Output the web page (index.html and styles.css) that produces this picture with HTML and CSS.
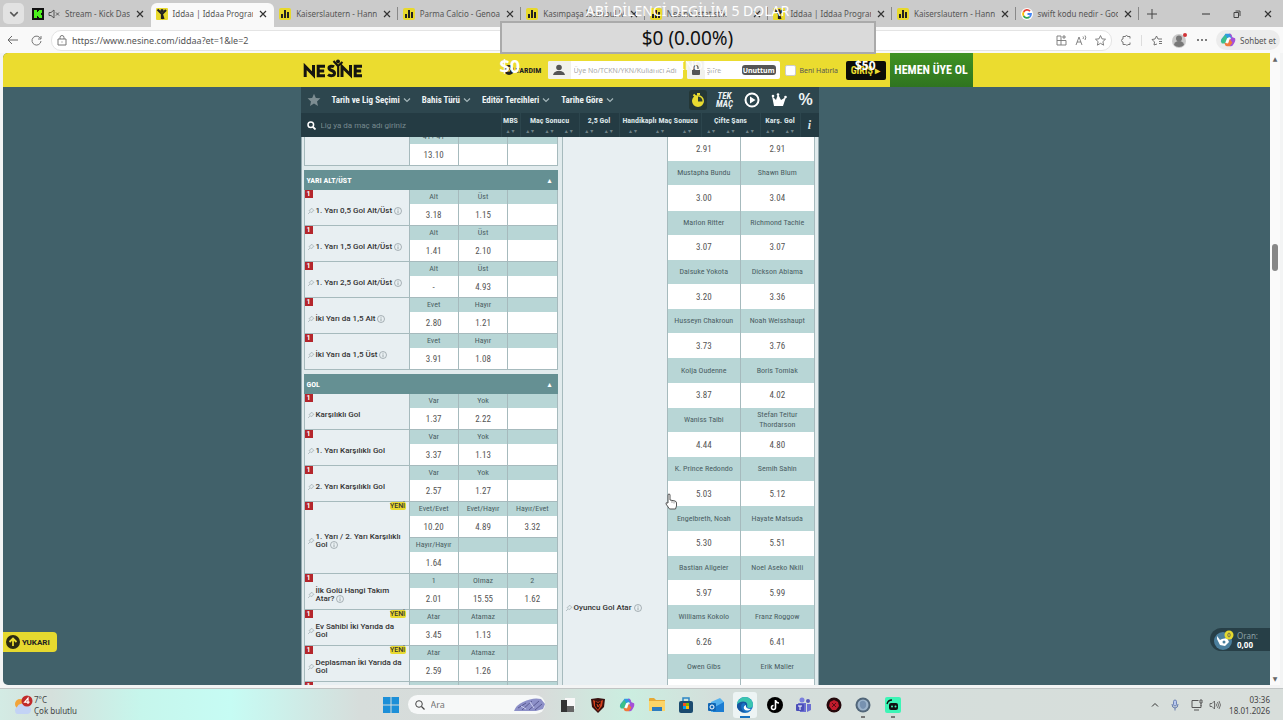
FILE: index.html
```html
<!DOCTYPE html>
<html lang="tr">
<head>
	<meta charset="UTF-8">
	<title>Iddaa | Iddaa Programı | Nesine</title>
	<link rel="stylesheet" href="styles.css">
</head>
<body>
	<svg class="defs" aria-hidden="true">
		<symbol id="close" viewBox="0 0 8 8"><path d="M1 1l6 6M7 1l-6 6" stroke="#333" stroke-width="1.2"/></symbol>
		<symbol id="stats" viewBox="0 0 12 12"><rect width="12" height="12" rx="2" fill="#e8d92c"/><path d="M2 6h2v4H2zM5 2h2v8H5zM8 4h2v6H8z" fill="#222"/></symbol>
		<symbol id="man" viewBox="0 0 12 12"><rect width="12" height="12" rx="1" fill="#e8d92c"/><circle cx="6" cy="2.6" r="1.600" fill="#222"/><path d="M1.500 1.500l4.500 4.500 4-4M6 5v6M5.500 5l2 6" stroke="#222" stroke-width="2.200" fill="none"/></symbol>
		<symbol id="down" viewBox="0 0 8 8"><path d="M1 2.500l3 3 3-3" fill="none" stroke="currentColor" stroke-width="1.200"/></symbol>
		<symbol id="star" viewBox="0 0 12 12"><path d="M6 .6l1.600 3.600 3.900.4-2.900 2.600.8 3.900L6 9.100l-3.400 2 .8-3.900L.5 4.600l3.900-.4z"/></symbol>
		<symbol id="pin" viewBox="0 0 8 8"><path d="M4.500 1l2.500 2.500-1.500.5-1 2-2.500-2.500 2-1zM3 5L1 7" fill="none" stroke="#aab6ba" stroke-width=".8"/></symbol>
		<symbol id="info" viewBox="0 0 8 8"><circle cx="4" cy="4" r="3.500" fill="none" stroke="#8b979b" stroke-width=".7"/><path d="M4 3.400v2.800M4 1.800v.9" stroke="#8b979b" stroke-width=".8"/></symbol>
		<symbol id="copilot" viewBox="0 0 18 18"><path d="M6 2h6l2 5-4-1-4 6-5-1c0-4 3-5 5-9z" fill="#2f9be0"/><path d="M2 8l4-5 2 4-2 6H3c-2 0-2-2-1-5z" fill="#3cc08a"/><path d="M10 2c3 0 3 1 4 4l3 1c1 3-1 5-2 7-1 2-2 2-4 2l-1-5 3-5z" fill="#a54fd8"/><path d="M5 12l4 1 2-5 3 4-3 4H8c-2 0-2-1-3-4z" fill="#f07a3c"/><path d="M8 7l3-1-2 6-3 0z" fill="#fff"/></symbol>
	</svg>

	<div class="tabbar">
		<button class="tab-menu" aria-label="Sekmeler"><svg width="10" height="10"><use href="#down"/></svg></button>
		<div class="tabs">
			<div class="tab">
				<svg width="12" height="12" viewBox="0 0 12 12"><rect width="12" height="12" fill="#111"/><path d="M2 2h3v2h1V3h1V2h3v3H9v2h1v3H7V9H6V8H5v2H2z" fill="#4cf01c"/></svg>
				<svg width="12" height="10" viewBox="0 0 12 10"><path d="M1 3.500h2l3-2.500v8L3 6.500H1zM8 3.500l3 3M11 3.500l-3 3" fill="none" stroke="#555"/></svg>
				<span>Stream - Kick Dashboard</span>
				<button class="tab-close" aria-label="Kapat"><svg width="8" height="8"><use href="#close"/></svg></button>
			</div>
			<div class="tab active">
				<svg width="12" height="12"><use href="#man"/></svg>
				<span>Iddaa | Iddaa Programı | Nesine</span>
				<button class="tab-close" aria-label="Kapat"><svg width="8" height="8"><use href="#close"/></svg></button>
			</div>
			<div class="tab line">
				<svg width="12" height="12"><use href="#stats"/></svg>
				<span>Kaiserslautern - Hannover</span>
				<button class="tab-close" aria-label="Kapat"><svg width="8" height="8"><use href="#close"/></svg></button>
			</div>
			<div class="tab line">
				<svg width="12" height="12"><use href="#stats"/></svg>
				<span>Parma Calcio - Genoa Genel</span>
				<button class="tab-close" aria-label="Kapat"><svg width="8" height="8"><use href="#close"/></svg></button>
			</div>
			<div class="tab line">
				<svg width="12" height="12"><use href="#stats"/></svg>
				<span>Kasımpaşa İstanbul Maçı</span>
				<button class="tab-close" aria-label="Kapat"><svg width="8" height="8"><use href="#close"/></svg></button>
			</div>
			<div class="tab line">
				<svg width="12" height="12"><use href="#stats"/></svg>
				<span>Nesine İstatistik</span>
				<button class="tab-close" aria-label="Kapat"><svg width="8" height="8"><use href="#close"/></svg></button>
			</div>
			<div class="tab line">
				<svg width="12" height="12"><use href="#man"/></svg>
				<span>Iddaa | Iddaa Programı | Nesine</span>
				<button class="tab-close" aria-label="Kapat"><svg width="8" height="8"><use href="#close"/></svg></button>
			</div>
			<div class="tab line">
				<svg width="12" height="12"><use href="#stats"/></svg>
				<span>Kaiserslautern - Hannover</span>
				<button class="tab-close" aria-label="Kapat"><svg width="8" height="8"><use href="#close"/></svg></button>
			</div>
			<div class="tab line">
				<svg width="12" height="12" viewBox="0 0 12 12"><circle cx="6" cy="6" r="6" fill="#fff"/><g fill="none" stroke-width="1.800"><path d="M9 3.200A4 4 0 0 0 2.600 4" stroke="#ea4335"/><path d="M2.600 4a4 4 0 0 0 0 4" stroke="#fbbc05"/><path d="M2.600 8A4 4 0 0 0 8.500 9" stroke="#34a853"/><path d="M8.500 9A4 4 0 0 0 10 6H6.500" stroke="#4285f4"/></g></svg>
				<span>swift kodu nedir - Google'da</span>
				<button class="tab-close" aria-label="Kapat"><svg width="8" height="8"><use href="#close"/></svg></button>
			</div>
		</div>
		<div class="window-controls">
			<button aria-label="Yeni sekme"><svg width="10" height="10" viewBox="0 0 10 10"><path d="M5 0v10M0 5h10" stroke="#444"/></svg></button>
			<span class="space"></span>
			<button aria-label="Küçült"><svg width="8" height="8" viewBox="0 0 8 8"><path d="M0 4h8" stroke="#333"/></svg></button>
			<button aria-label="Geri yükle"><svg width="8" height="8" viewBox="0 0 8 8"><path d="M1 2.500h4.500v5H1zM2.500 1h4.500v5" fill="none" stroke="#444"/></svg></button>
			<button aria-label="Pencereyi kapat"><svg width="8" height="8"><use href="#close"/></svg></button>
		</div>
	</div>

	<div class="toolbar">
		<button aria-label="Geri"><svg width="12" height="10" viewBox="0 0 12 10"><path d="M11 5H1M5 1L1 5l4 4" fill="none" stroke="#666"/></svg></button>
		<button aria-label="Yenile"><svg width="11" height="11" viewBox="0 0 11 11"><path d="M9.500 3.500A4.500 4.500 0 1 0 10 6M10 1v3H7" fill="none" stroke="#777"/></svg></button>
		<div class="address">
			<svg width="10" height="11" viewBox="0 0 10 11"><path d="M1 4h8v6H1zM3 4V2.500a2 2 0 0 1 4 0V4M5 6.500v1" fill="none" stroke="#777"/></svg>
			<input type="text" aria-label="Adres" value="https://www.nesine.com/iddaa?et=1&amp;le=2">
			<button aria-label="Uygulamalar"><svg width="11" height="11" viewBox="0 0 11 11"><path d="M1 1h4v9H1zM1 5.500h9M5 10h5V5.500M8 0v4M6 2h4" fill="none" stroke="#777" stroke-width=".9"/></svg></button>
			<button aria-label="Sesli oku"><svg width="12" height="11" viewBox="0 0 12 11"><path d="M1 10l3-8 3 8M2 7h4M8 1.500q1 1 0 2.500M10 .5q1.500 2 0 4.500" fill="none" stroke="#777" stroke-width=".9"/></svg></button>
			<button aria-label="Sık kullanılan ekle"><svg class="outline" width="11" height="11"><use href="#star"/></svg></button>
		</div>
		<div class="tools">
			<button aria-label="Uzantılar"><svg width="11" height="11" viewBox="0 0 11 11"><path d="M9 3.500V1.500H6.500a1 1 0 0 0-2 0H2v2.500a1.500 1.500 0 0 0 0 3V9.500h2.500a1.500 1.500 0 0 0 2.500 0H9V7.500" fill="none" stroke="#777"/></svg></button>
			<i class="bar"></i>
			<button aria-label="Sık kullanılanlar"><svg width="12" height="11" viewBox="0 0 12 11"><path d="M6 9L3 10l.5-3L1 4.500l3-.5 1.500-3L7 4h4M8 6.500h3M8 8.500h3" fill="none" stroke="#666" stroke-width=".9"/></svg></button>
			<button aria-label="Profil"><svg width="16" height="16" viewBox="0 0 16 16"><circle cx="7" cy="9" r="7" fill="#c9c9c9"/><circle cx="7" cy="6.500" r="3" fill="#777"/><path d="M2 13a5 4 0 0 1 10 0 7 7 0 0 1-10 0z" fill="#777"/><circle cx="13" cy="3" r="2" fill="#d13438"/></svg></button>
			<button aria-label="Ayarlar"><svg width="10" height="4" viewBox="0 0 10 4"><circle cx="1" cy="2" r="1" fill="#555"/><circle cx="5" cy="2" r="1" fill="#555"/><circle cx="9" cy="2" r="1" fill="#555"/></svg></button>
			<button class="chat"><svg width="16" height="16"><use href="#copilot"/></svg>Sohbet et</button>
		</div>
	</div>

	<div class="browser">
		<main class="page">
			<header class="site">
				<div class="site-inner">
					<a class="logo" href="#" aria-label="Nesine">
						<svg width="60" height="20" viewBox="0 0 60 20"><g fill="none" stroke="#151510" stroke-width="3"><path d="M2.200 18V7.500L10.500 16V6M22 7.200h-6.800v9.600H22M15.200 12h6M31 7.800c-1.500-1-5-1-5 1.200 0 3 5.500 2 5.500 5.200 0 3-4.500 3-6.500 1.400M39 18V7.500l8.500 8.500V6M59 7.200h-6.800v9.600H59M52.200 12h6"/><path d="M30.500 2l4.500 5L39.500 3M35.200 6v12" stroke-width="2.200"/></g><circle cx="35" cy="2.500" r="2" fill="#151510"/></svg>
					</a>
					<a class="help" href="#"><svg width="14" height="12" viewBox="0 0 14 12"><circle cx="7" cy="6" r="5" fill="#222"/><path d="M5 4.500q2-2 4 0Q9 6 7 6.500V8" fill="none" stroke="#ebdc2f"/></svg>YARDIM</a>
					<label class="field user">
						<i><svg width="12" height="12" viewBox="0 0 12 12"><circle cx="6" cy="3.500" r="2.800" fill="#555"/><path d="M0 11q.5-3 4-4h4q3.500 1 4 4z" fill="#555"/></svg></i>
						<input type="text" aria-label="Kullanıcı adı" placeholder="Üye No/TCKN/YKN/Kullanıcı Adı">
					</label>
					<div class="field pass">
						<i><svg width="8" height="10" viewBox="0 0 8 10"><rect y="4" width="8" height="6" rx="1" fill="#555"/><path d="M2 4V2.500a2 2 0 0 1 4 0V4" fill="none" stroke="#555" stroke-width="1.200"/></svg></i>
						<input type="password" aria-label="Şifre" placeholder="Şifre">
						<button>Unuttum</button>
					</div>
					<label class="remember"><input type="checkbox">Beni Hatırla</label>
					<button class="login">GİRİŞ ▸</button>
					<a class="join" href="#">HEMEN ÜYE OL</a>
				</div>
			</header>

			<div class="content">
				<section class="book">
					<nav class="menu">
						<svg class="fav" width="14" height="14"><use href="#star"/></svg>
						<button>Tarih ve Lig Seçimi <svg width="8" height="8"><use href="#down"/></svg></button>
						<button>Bahis Türü <svg width="8" height="8"><use href="#down"/></svg></button>
						<button>Editör Tercihleri <svg width="8" height="8"><use href="#down"/></svg></button>
						<button>Tarihe Göre <svg width="8" height="8"><use href="#down"/></svg></button>
						<div class="quick">
							<button class="on" aria-label="Canlı"><svg width="14" height="16" viewBox="0 0 14 16"><path d="M2.500 2.500l2 2M6 2h3" stroke="#e9dc30" stroke-width="2"/><circle cx="7" cy="9" r="5" fill="#e9dc30" stroke="#e9dc30" stroke-width="2"/><path d="M7 9.500V4.500a5 5 0 0 1 4.500 5z" fill="#2c3f33"/></svg></button>
							<button class="single">TEK<br>MAÇ</button>
							<button aria-label="Yayın"><svg width="16" height="16" viewBox="0 0 16 16"><circle cx="8" cy="8" r="6.500" fill="none" stroke="#fff" stroke-width="2"/><path d="M6 4.500l5.500 3.500L6 11.500z" fill="#fff"/></svg></button>
							<button aria-label="Kral"><svg width="16" height="16" viewBox="0 0 16 16"><path d="M3 14L1 4l4 4 2-6 3 6 5-3-3 9z" fill="#fff"/><circle cx="2" cy="4" r="1.300" fill="#fff"/><circle cx="7" cy="2.500" r="1.300" fill="#fff"/><circle cx="14.500" cy="5" r="1.300" fill="#fff"/></svg></button>
							<button class="percent">%</button>
						</div>
					</nav>
					<div class="filters">
						<label class="search">
							<svg width="9" height="9" viewBox="0 0 9 9"><circle cx="3.800" cy="3.800" r="2.800" fill="none" stroke="#fff" stroke-width="1.500"/><path d="M6 6l2.500 2.500" stroke="#fff" stroke-width="1.800"/></svg>
							<input type="text" aria-label="Ara" placeholder="Lig ya da maç adı giriniz">
						</label>
						<div class="col c1">MBS<small>▴ ▾</small></div>
						<div class="col c3">Maç Sonucu<small>▴ ▾<b></b>▴ ▾<b></b>▴ ▾</small></div>
						<div class="col c2">2,5 Gol<small>▴ ▾<b></b>▴ ▾</small></div>
						<div class="col c4">Handikaplı Maç Sonucu<small>▴ ▾<b></b>▴ ▾<b></b>▴ ▾</small></div>
						<div class="col c3">Çifte Şans<small>▴ ▾<b></b>▴ ▾<b></b>▴ ▾</small></div>
						<div class="col c2">Karş. Gol<small>▴ ▾<b></b>▴ ▾</small></div>
						<div class="col about">i</div>
					</div>

					<div class="odds">
						<div class="markets">
							<table>
								<tr class="labels"><th rowspan="2"></th><td>41+ 41</td><td></td><td></td></tr>
								<tr><td><button>13.10</button></td><td></td><td></td></tr>
							</table>

							<h2>YARI ALT/ÜST <span>▴</span></h2>
							<table>
								<tr class="labels"><th rowspan="2"><b class="mbs">1</b><div><svg><use href="#pin"/></svg><p>1. Yarı 0,5 Gol Alt/Üst <svg><use href="#info"/></svg></p></div></th><td>Alt</td><td>Üst</td><td></td></tr>
								<tr><td><button>3.18</button></td><td><button>1.15</button></td><td></td></tr>
								<tr class="labels"><th rowspan="2"><b class="mbs">1</b><div><svg><use href="#pin"/></svg><p>1. Yarı 1,5 Gol Alt/Üst <svg><use href="#info"/></svg></p></div></th><td>Alt</td><td>Üst</td><td></td></tr>
								<tr><td><button>1.41</button></td><td><button>2.10</button></td><td></td></tr>
								<tr class="labels"><th rowspan="2"><b class="mbs">1</b><div><svg><use href="#pin"/></svg><p>1. Yarı 2,5 Gol Alt/Üst <svg><use href="#info"/></svg></p></div></th><td>Alt</td><td>Üst</td><td></td></tr>
								<tr><td>-</td><td><button>4.93</button></td><td></td></tr>
								<tr class="labels"><th rowspan="2"><b class="mbs">1</b><div><svg><use href="#pin"/></svg><p>İki Yarı da 1,5 Alt <svg><use href="#info"/></svg></p></div></th><td>Evet</td><td>Hayır</td><td></td></tr>
								<tr><td><button>2.80</button></td><td><button>1.21</button></td><td></td></tr>
								<tr class="labels"><th rowspan="2"><b class="mbs">1</b><div><svg><use href="#pin"/></svg><p>İki Yarı da 1,5 Üst <svg><use href="#info"/></svg></p></div></th><td>Evet</td><td>Hayır</td><td></td></tr>
								<tr><td><button>3.91</button></td><td><button>1.08</button></td><td></td></tr>
							</table>

							<h2>GOL <span>▴</span></h2>
							<table>
								<tr class="labels"><th rowspan="2"><b class="mbs">1</b><div><svg><use href="#pin"/></svg><p>Karşılıklı Gol</p></div></th><td>Var</td><td>Yok</td><td></td></tr>
								<tr><td><button>1.37</button></td><td><button>2.22</button></td><td></td></tr>
								<tr class="labels"><th rowspan="2"><b class="mbs">1</b><div><svg><use href="#pin"/></svg><p>1. Yarı Karşılıklı Gol</p></div></th><td>Var</td><td>Yok</td><td></td></tr>
								<tr><td><button>3.37</button></td><td><button>1.13</button></td><td></td></tr>
								<tr class="labels"><th rowspan="2"><b class="mbs">1</b><div><svg><use href="#pin"/></svg><p>2. Yarı Karşılıklı Gol</p></div></th><td>Var</td><td>Yok</td><td></td></tr>
								<tr><td><button>2.57</button></td><td><button>1.27</button></td><td></td></tr>
								<tr class="labels"><th rowspan="4"><b class="mbs">1</b><b class="new">YENİ</b><div><svg><use href="#pin"/></svg><p>1. Yarı / 2. Yarı Karşılıklı Gol <svg><use href="#info"/></svg></p></div></th><td>Evet/Evet</td><td>Evet/Hayır</td><td>Hayır/Evet</td></tr>
								<tr><td><button>10.20</button></td><td><button>4.89</button></td><td><button>3.32</button></td></tr>
								<tr class="labels"><td>Hayır/Hayır</td><td></td><td></td></tr>
								<tr><td><button>1.64</button></td><td></td><td></td></tr>
								<tr class="labels"><th rowspan="2"><b class="mbs">1</b><div><svg><use href="#pin"/></svg><p>İlk Golü Hangi Takım Atar? <svg><use href="#info"/></svg></p></div></th><td>1</td><td>Olmaz</td><td>2</td></tr>
								<tr><td><button>2.01</button></td><td><button>15.55</button></td><td><button>1.62</button></td></tr>
								<tr class="labels"><th rowspan="2"><b class="mbs">1</b><b class="new">YENİ</b><div><svg><use href="#pin"/></svg><p>Ev Sahibi İki Yarıda da Gol</p></div></th><td>Atar</td><td>Atamaz</td><td></td></tr>
								<tr><td><button>3.45</button></td><td><button>1.13</button></td><td></td></tr>
								<tr class="labels"><th rowspan="2"><b class="mbs">1</b><b class="new">YENİ</b><div><svg><use href="#pin"/></svg><p>Deplasman İki Yarıda da Gol</p></div></th><td>Atar</td><td>Atamaz</td><td></td></tr>
								<tr><td><button>2.59</button></td><td><button>1.26</button></td><td></td></tr>
								<tr class="labels"><th rowspan="2"><b class="mbs">1</b></th><td></td><td></td><td></td></tr>
								<tr><td></td><td></td><td></td></tr>
							</table>
						</div>

						<div class="scorers">
							<table>
								<tr><th rowspan="23"><div><svg><use href="#pin"/></svg><p>Oyuncu Gol Atar <svg><use href="#info"/></svg></p></div></th><td><button>2.91</button></td><td><button>2.91</button></td></tr>
								<tr class="labels"><td>Mustapha Bundu</td><td>Shawn Blum</td></tr>
								<tr><td><button>3.00</button></td><td><button>3.04</button></td></tr>
								<tr class="labels"><td>Marlon Ritter</td><td>Richmond Tachie</td></tr>
								<tr><td><button>3.07</button></td><td><button>3.07</button></td></tr>
								<tr class="labels"><td>Daisuke Yokota</td><td>Dickson Abiama</td></tr>
								<tr><td><button>3.20</button></td><td><button>3.36</button></td></tr>
								<tr class="labels"><td>Husseyn Chakroun</td><td>Noah Weisshaupt</td></tr>
								<tr><td><button>3.73</button></td><td><button>3.76</button></td></tr>
								<tr class="labels"><td>Kolja Oudenne</td><td>Boris Tomiak</td></tr>
								<tr><td><button>3.87</button></td><td><button>4.02</button></td></tr>
								<tr class="labels"><td>Waniss Taibi</td><td>Stefan Teitur Thordarson</td></tr>
								<tr><td><button>4.44</button></td><td><button>4.80</button></td></tr>
								<tr class="labels"><td>K. Prince Redondo</td><td>Semih Sahin</td></tr>
								<tr><td><button>5.03</button></td><td><button>5.12</button></td></tr>
								<tr class="labels"><td>Engelbreth, Noah</td><td>Hayate Matsuda</td></tr>
								<tr><td><button>5.30</button></td><td><button>5.51</button></td></tr>
								<tr class="labels"><td>Bastian Allgeier</td><td>Noel Aseko Nkili</td></tr>
								<tr><td><button>5.97</button></td><td><button>5.99</button></td></tr>
								<tr class="labels"><td>Williams Kokolo</td><td>Franz Roggow</td></tr>
								<tr><td><button>6.26</button></td><td><button>6.41</button></td></tr>
								<tr class="labels"><td>Owen Gibs</td><td>Erik Maller</td></tr>
								<tr><td></td><td></td></tr>
							</table>
						</div>
					</div>
				</section>
			</div>

			<button class="to-top"><svg width="14" height="14" viewBox="0 0 14 14"><circle cx="7" cy="7" r="7" fill="#2a2a12"/><path d="M7 11V4M3.500 7L7 3.500 10.500 7" fill="none" stroke="#ebdc2f" stroke-width="1.800"/></svg>YUKARI</button>
			<button class="coupon">
				<svg width="22" height="20" viewBox="0 0 22 20"><circle cx="10" cy="11" r="9" fill="#4b7f9d"/><path d="M4 6l3 4 2-1 5-1 2 4-4 4-5-1-3-6z" fill="#fff"/><circle cx="11" cy="12" r="1.500" fill="#4b7f9d"/><circle cx="16" cy="5" r="4.500" fill="#e4d92f"/><ellipse cx="16" cy="5" rx="1.200" ry="2" fill="none" stroke="#555" stroke-width=".8"/></svg>
				<span>Oran:<b>0,00</b></span>
			</button>
		</main>
		<div class="scrollbar"><i>▲</i><span class="before"></span><span class="thumb"></span><span class="after"></span><i>▼</i></div>
	</div>

	<footer class="taskbar">
		<div class="weather">
			<svg width="20" height="20" viewBox="0 0 20 20"><circle cx="7" cy="9" r="5" fill="#f2a43a"/><path d="M4 19a4 4 0 0 1 0-7 5 5 0 0 1 9-1 4 4 0 0 1 2 8z" fill="#c3d3f5"/><circle cx="14" cy="6" r="5.500" fill="#c12a2a"/><path d="M15 9V3.200L11.600 7.200h5" fill="none" stroke="#fff" stroke-width="1.200"/></svg>
			<p>7°C<br>Çok bulutlu</p>
		</div>
		<div class="dock">
			<button aria-label="Başlat"><svg width="16" height="16" viewBox="0 0 16 16"><path d="M0 0h7.500v7.500H0zM8.500 0H16v7.500H8.500zM0 8.500h7.500V16H0zM8.500 8.500H16V16H8.500z" fill="#1c8fd8"/></svg></button>
			<label class="find">
				<svg width="10" height="10" viewBox="0 0 10 10"><circle cx="4" cy="4" r="3.300" fill="none" stroke="#444"/><path d="M6.500 6.500l3 3" stroke="#444" stroke-width="1.200"/></svg>
				<input type="text" aria-label="Görev çubuğunda ara" placeholder="Ara">
				<svg width="31" height="14" viewBox="0 0 31 14"><path d="M0 13q2-6 9-9Q19-1 27 1l4 5-2 5-7 2z" fill="#8d90c8"/><path d="M4 10l8-5M8 12l10-9M15 12L25 3M21 12l7-6" stroke="#5a5b94"/><path d="M7 8l5 3M16 4l4 6" stroke="#cdd0f0"/></svg>
			</label>
			<div class="apps">
				<button aria-label="Görev görünümü"><svg width="16" height="16" viewBox="0 0 16 16"><path d="M5 1h10v11H5z" fill="#f8f8f8"/><path d="M1 3h6v6h7v6H1z" fill="#333"/><path d="M7 9h7v6H7z" fill="#666"/></svg></button>
				<button aria-label="Kalkan"><svg width="16" height="16" viewBox="0 0 16 16"><path d="M1 2l7-1 7 1-1 8-6 6-6-6z" fill="#3a1210"/><path d="M3 3l5 2 5-2-1 6-4 5-4-5z" fill="#d8431d"/><path d="M5 4l3 2 3-2-1 5-2 4-3-4z" fill="#2b0d0b"/><path d="M7 7l1 3 2-3" fill="none" stroke="#d8431d"/></svg></button>
				<button aria-label="Copilot"><svg width="16" height="16"><use href="#copilot"/></svg></button>
				<button aria-label="Dosya Gezgini"><svg width="16" height="16" viewBox="0 0 16 16"><path d="M0 2q0-1 1-1h4l2 2h9v4H0z" fill="#e6a935"/><path d="M0 4h16v10H0z" fill="#fbd467"/><path d="M3 10h10v4H3z" fill="#2d7cc0"/></svg></button>
				<button aria-label="Mağaza"><svg width="16" height="16" viewBox="0 0 16 16"><path d="M5 4V1h6v3" fill="none" stroke="#2d86c5" stroke-width="1.500"/><rect x="1" y="4" width="14" height="12" rx="2" fill="#1b4b70"/><path d="M5 6h3v3H5z" fill="#f25022"/><path d="M8 6h3v3H8z" fill="#7fba00"/><path d="M5 9h3v3H5z" fill="#00a4ef"/><path d="M8 9h3v3H8z" fill="#ffb900"/></svg></button>
				<button aria-label="Outlook"><svg width="16" height="16" viewBox="0 0 16 16"><path d="M3 5l9-4 4 4v10H3z" fill="#55b1ee"/><path d="M5 11l11-6v10H5z" fill="#1b7cd2"/><rect y="6" width="8" height="8" rx="1" fill="#1267b5"/><circle cx="4" cy="10" r="2" fill="none" stroke="#fff"/></svg></button>
				<button class="open now" aria-label="Edge"><svg width="16" height="16" viewBox="0 0 16 16"><circle cx="8" cy="8" r="8" fill="#1a74c5"/><path d="M0 8a8 8 0 0 1 16 0c0 3-4 4-6 2 1-2 0-5-3-5S1 6 0 8z" fill="#3ac5b0"/><path d="M10 10c-2-1-1-4-3-4-4 0-4 7 1 9-5 1-9-4-8-7 2-4 9-5 10-1z" fill="#1555a0"/><path d="M9 8q-1 4 5 4-4 3-7 0-1-3 2-4z" fill="#fff"/></svg></button>
				<button aria-label="TikTok"><svg width="16" height="16" viewBox="0 0 16 16"><circle cx="8" cy="8" r="8" fill="#000"/><path d="M8.500 3v7.500a2 2 0 1 1-2-2M8.500 3.500q1 2.500 3.500 2.500" fill="none" stroke="#fff" stroke-width="1.600"/></svg></button>
				<button aria-label="Teams"><svg width="16" height="16" viewBox="0 0 16 16"><circle cx="6" cy="3" r="2.500" fill="#7a7fdd"/><circle cx="12" cy="4" r="2" fill="#5558b5"/><path d="M2 6h8v9H4zM11 7h4v6l-4 2z" fill="#6c6fd2"/><rect y="7" width="8" height="7" rx="1" fill="#4b4fb8"/><path d="M2 9h4M4 9v4" stroke="#fff"/></svg></button>
				<button aria-label="Kayıt"><svg width="16" height="16" viewBox="0 0 16 16"><circle cx="8" cy="8" r="7.500" fill="#25090c"/><path d="M8 3l4 2 1 4-3 4H6L3 9l1-4z" fill="#c21b2c"/><path d="M6 6l4 4M10 6l-4 4" stroke="#5b0d15"/></svg></button>
				<button class="open" aria-label="OBS"><svg width="16" height="16" viewBox="0 0 16 16"><circle cx="8" cy="8" r="7.500" fill="#516679"/><circle cx="8" cy="8" r="5.500" fill="#9cb3cb"/><path d="M5 5q4-3 6 1 1 5-3 6-4-1-3-7z" fill="#7791b0"/></svg></button>
				<button class="open" aria-label="Kick Bot"><svg width="16" height="16" viewBox="0 0 16 16"><rect width="16" height="16" rx="2" fill="#3df5b6"/><rect x="4" y="6" width="9" height="7" rx="2" fill="#111"/><path d="M2 7q1-4 5-4" fill="none" stroke="#111" stroke-width="1.300"/><circle cx="7" cy="9.500" r="1" fill="#3df5b6"/><circle cx="10.500" cy="9.500" r="1" fill="#3df5b6"/></svg></button>
			</div>
		</div>
		<div class="tray">
			<svg width="8" height="8" viewBox="0 0 8 8"><path d="M1 5.500l3-3 3 3" fill="none" stroke="#333"/></svg>
			<svg width="8" height="12" viewBox="0 0 8 12"><rect x="2.500" y="1" width="3" height="6" rx="1.500" fill="#b8c8f0" stroke="#5870a8" stroke-width=".8"/><path d="M1 5q0 4 3 4t3-4M4 9v2.500" fill="none" stroke="#5870a8" stroke-width=".9"/></svg>
			<svg width="12" height="12" viewBox="0 0 12 12"><path d="M7.500 1.500H1v7h9V6M3 11h5M9 1h2v3H9zM10 4v3" fill="none" stroke="#555"/></svg>
			<svg width="12" height="10" viewBox="0 0 12 10"><path d="M1 3.500h2L5.500 1v8L3 6.500H1zM7 3.500q1 1.500 0 3M8.500 2q2 3 0 6M10 1q3 4 0 8" fill="none" stroke="#555" stroke-width=".8"/></svg>
			<p>03:36<br>18.01.2026</p>
		</div>
	</footer>

	<!-- stream overlay -->
	<div class="overlay">
		<p class="title">ABİ DİLENCİ DEGİLİM 5 DOLAR</p>
		<p class="goal">$0 (0.00%)</p>
		<p class="range"><span>$0</span><small>NO Z YINDEE SE</small><span class="max">$50</span></p>
	</div>
	<svg class="cursor" width="12" height="17" viewBox="0 0 12 17"><path d="M3 1.500q1-1 2 0V7l5 1q1.500.5 1.500 2v3l-1 3h-6L1 11q-.5-2 2-1z" fill="#fff" stroke="#555"/><path d="M7 8v2M9 8.500v2" stroke="#777" stroke-width=".7"/></svg>
</body>
</html>
```
FILE: styles.css
```css
* {
	box-sizing: border-box;
}
body {
	margin: 0;
	height: 100vh;
	overflow: hidden;
	display: flex;
	flex-direction: column;
	position: relative;
	background: #f3f4f4;
	font-family: "Noto Sans", sans-serif;
	font-size: 8px;
	color: #555;
}
button, input {
	font: inherit;
	color: inherit;
	border: 0;
	padding: 0;
	margin: 0;
	background: none;
	min-width: 0;
	outline: 0;
}
button {
	display: flex;
	align-items: center;
	justify-content: center;
}
a {
	color: inherit;
	text-decoration: none;
}
p, h2 {
	margin: 0;
}
svg {
	flex: none;
}
.defs {
	position: absolute;
	width: 0;
	height: 0;
}

/* browser */
.tabbar {
	height: 27px;
	flex: none;
	display: flex;
	background: #cbcbcb;
}
.tab-menu {
	width: 21px;
	height: 21px;
	margin: 3px;
	border-radius: 5px;
	background: #e2e2e2;
}
.tabs {
	flex: 1;
	min-width: 0;
	display: flex;
}
.tab {
	flex: 1 1 0;
	min-width: 0;
	display: flex;
	align-items: center;
	gap: 4px;
	padding: 0 5px;
	position: relative;
}
.tab span {
	flex: 1;
	overflow: hidden;
	white-space: nowrap;
	padding-left: 1px;
}
.tab.active {
	background: #f9f9f9;
	border-radius: 6px 6px 0 0;
	margin-top: 3px;
	padding-bottom: 3px;
}
.tab-close {
	width: 12px;
}
.tab.line::after {
	content: "";
	position: absolute;
	right: 0;
	top: 7px;
	width: 1px;
	height: 13px;
	background: #888;
}
.window-controls {
	width: 144px;
	display: flex;
	padding: 0 0 0 6px;
}
.window-controls button {
	width: 31px;
}
.window-controls button:first-child {
	width: 14px;
}
.space {
	flex: 1;
}
.toolbar {
	height: 26px;
	flex: none;
	display: flex;
	align-items: center;
	background: #f9f9f9;
	padding: 0 3px 0 7px;
	gap: 12px;
}
.address {
	flex: 1;
	height: 21px;
	display: flex;
	align-items: center;
	gap: 8px;
	padding: 0 5px;
	margin-left: -3px;
	background: #fff;
	border: 1px solid #e4e4e4;
	border-radius: 10px;
}
.address input {
	flex: 1;
	font-size: 9px;
	margin-left: -3px;
}
.outline {
	fill: none;
	stroke: #777;
}
.tools {
	display: flex;
	align-items: center;
	gap: 9px;
	margin-left: -3px;
}
.bar {
	width: 1px;
	height: 11px;
	background: #ddd;
}
.chat {
	height: 20px;
	padding: 0 4px;
	gap: 4px;
	border-radius: 10px;
	background: #ececec;
	white-space: nowrap;
}
.browser {
	flex: 1;
	min-height: 0;
	display: flex;
	padding: 0 3px 3px;
}
.page {
	flex: 1;
	min-width: 0;
	display: flex;
	flex-direction: column;
	position: relative;
	overflow: hidden;
	border-radius: 5px 0 0 5px;
	background: #41616a;
	font-family: "Liberation Sans Narrow", "Roboto Condensed", Roboto, sans-serif;
}
.scrollbar {
	width: 10px;
	display: flex;
	flex-direction: column;
	align-items: center;
	background: #fafafa;
}
.scrollbar i {
	font: 6px/12px "DejaVu Sans", sans-serif;
	color: #666;
}
.before {
	flex: 29;
}
.thumb {
	width: 6px;
	height: 27px;
	border-radius: 3px;
	background: #888;
}
.after {
	flex: 65;
}

/* site header */
.site {
	height: 34px;
	flex: none;
	background: #ebdc2f;
}
.site-inner {
	width: 672px;
	max-width: 100%;
	height: 34px;
	margin: 0 auto;
	display: flex;
	align-items: center;
}
.logo {
	height: 22px;
	margin-left: 2px;
	margin-right: auto;
}
.help {
	display: flex;
	align-items: center;
	color: #222;
	font-size: 8px;
	font-weight: bold;
	white-space: nowrap;
	width: 46px;
}
.field {
	height: 18px;
	display: flex;
	align-items: center;
	border-radius: 2px;
	background: #fff;
	overflow: hidden;
	font-family: "Noto Sans", sans-serif;
	font-size: 7px;
}
.field input {
	flex: 1;
}
.field input::placeholder {
	color: #aaa;
}
.field i {
	width: 23px;
	height: 18px;
	display: flex;
	align-items: center;
	justify-content: center;
	background: #f1f1ec;
}
.user {
	width: 135px;
	gap: 3px;
}
.pass {
	width: 93px;
	margin-left: 4px;
	gap: 2px;
	padding-right: 4px;
}
.pass i {
	width: 18px;
}
.pass button {
	height: 10px;
	padding: 0 1px;
	border-radius: 3px;
	background: #555;
	color: #fff;
	font-size: 7px;
	font-weight: bold;
}
.remember {
	width: 61px;
	margin-left: 5px;
	display: flex;
	align-items: center;
	gap: 4px;
	color: #555;
	font-family: "Noto Sans", sans-serif;
	font-size: 7px;
	white-space: nowrap;
}
.remember input {
	appearance: none;
	width: 11px;
	height: 11px;
	border: 1px solid #ccc;
	border-radius: 2px;
	background: #fff;
}
.login {
	width: 40px;
	height: 19px;
	border-radius: 2px;
	background: #0c0c08;
	color: #ebdc2f;
	font-size: 10px;
	font-weight: bold;
	white-space: nowrap;
}
.join {
	width: 83px;
	height: 34px;
	margin-left: 4px;
	display: flex;
	align-items: center;
	justify-content: center;
	background: #34801f;
	background: linear-gradient(#3f9222, #2f7420);
	color: #fff;
	font-size: 12px;
	font-weight: bold;
	white-space: nowrap;
}

/* bulletin */
.content {
	width: 672px;
	max-width: 100%;
	flex: 1;
	min-height: 0;
	margin: 0 auto;
}
.book {
	width: 518px;
	height: 100%;
	display: flex;
	flex-direction: column;
}
.menu {
	height: 26px;
	flex: none;
	display: flex;
	align-items: center;
	gap: 11px;
	padding: 0 4px 0 6px;
	background: #2d464e;
	color: #eef3f4;
	font-size: 9px;
	font-weight: bold;
	white-space: nowrap;
}
.menu > button {
	gap: 3px;
}
.menu > button svg {
	color: #a5b7bb;
}
.fav {
	fill: #7d8d92;
}
.quick {
	margin-left: auto;
	display: flex;
	align-items: center;
	gap: 9px;
}
.quick button {
	width: 18px;
	height: 20px;
}
.quick .on {
	border-radius: 3px;
	background: #243736;
}
.quick .single {
	display: block;
	font-size: 9px;
	line-height: 8px;
	font-style: italic;
}
.quick .percent {
	font-family: "Liberation Sans", sans-serif;
	font-size: 16px;
}
.filters {
	height: 24px;
	flex: none;
	display: flex;
	background: #243b43;
	color: #dbe4e6;
	font-size: 8px;
}
.search {
	flex: 1;
	display: flex;
	align-items: center;
	gap: 5px;
	padding-left: 6px;
}
.search input {
	flex: 1;
	font-family: Roboto, sans-serif;
	font-size: 8px;
}
.search input::placeholder {
	color: #76898f;
}
.col {
	display: flex;
	flex-direction: column;
	align-items: center;
	justify-content: center;
	gap: 2px;
	border-left: 1px solid #2c454d;
	font-weight: bold;
	line-height: 10px;
	white-space: nowrap;
}
.col small {
	align-self: stretch;
	display: flex;
	justify-content: space-evenly;
	font: 6px/6px "DejaVu Sans", sans-serif;
	color: #6f8187;
}
.c1 {
	width: 19px;
}
.c2 {
	width: 40px;
}
.c3 {
	width: 59px;
}
.c4 {
	width: 82px;
}
.about {
	width: 19px;
	font: italic bold 12px "Liberation Serif", serif;
}
.odds {
	flex: 1;
	min-height: 0;
	display: flex;
	gap: 4px;
	padding: 0 3px 0 2px;
	overflow: hidden;
	background: #e1ebed;
	border-left: 1px solid #93a8ae;
	border-right: 1px solid #93a8ae;
}
.markets {
	width: 254px;
	margin-top: -7px;
}
.markets h2 {
	height: 20px;
	margin-top: 4px;
	padding: 0 6px 0 3px;
	display: flex;
	align-items: center;
	justify-content: space-between;
	background: #659093;
	color: #fff;
	font-size: 8px;
}
.markets h2 span {
	font-family: "DejaVu Sans", sans-serif;
	font-weight: normal;
}
table {
	width: 100%;
	table-layout: fixed;
	border-collapse: separate;
	border-spacing: 0;
}
th {
	width: 106px;
	padding: 0 6px 0 2px;
	position: relative;
	background: #e8eff2;
	border: 1px solid #a6babd;
	border-width: 0 1px 1px;
	color: #333;
	font-family: Roboto, sans-serif;
	font-size: 8px;
	font-weight: 500;
	line-height: 8px;
	text-align: left;
}
th div {
	display: flex;
	align-items: center;
	gap: 1px;
	padding-top: 6px;
}
th svg {
	width: 8px;
	height: 8px;
	vertical-align: -2px;
}
td {
	height: 22px;
	padding: 0;
	background: #fff;
	border-right: 1px solid #a6babd;
	border-bottom: 1px solid #a6babd;
	font-size: 9px;
	line-height: 10px;
	text-align: center;
}
td button {
	width: 100%;
}
.labels td {
	height: 14px;
	background: #b8d6d6;
	border-bottom: 0;
	color: #4b6064;
	font-size: 8px;
}
.mbs, .new {
	position: absolute;
	top: 0;
	font-size: 7px;
	text-align: center;
}
.mbs {
	left: 0;
	width: 8px;
	background: #b4262c;
	color: #fff;
}
.new {
	right: 3px;
	width: 16px;
	border-radius: 2px;
	background: #e8da30;
	font-weight: 500;
}
.scorers {
	flex: 1;
	min-width: 0;
	margin-top: -1px;
}
.scorers table {
	height: 568px;
}
.scorers th {
	vertical-align: bottom;
	padding-bottom: 91px;
}
.scorers td {
	height: 25px;
	border-bottom: 0;
}
.scorers .labels td {
	height: 24px;
	padding: 0 4px;
}
.to-top {
	position: absolute;
	left: 0;
	bottom: 33px;
	height: 20px;
	padding: 0 7px 0 3px;
	gap: 2px;
	border-radius: 0 4px 4px 0;
	background: #e6d92f;
	color: #222;
	font-family: Roboto, sans-serif;
	font-size: 8px;
	font-weight: bold;
}
.coupon {
	position: absolute;
	right: 0;
	bottom: 34px;
	width: 60px;
	height: 23px;
	gap: 2px;
	justify-content: flex-start;
	padding-left: 3px;
	border-radius: 12px 0 0 12px;
	background: #273f47;
	color: #8ba0a5;
	font-family: "Noto Sans", sans-serif;
	font-size: 8px;
	line-height: 9px;
	text-align: left;
}
.coupon b {
	display: block;
	color: #fff;
}

/* taskbar */
.taskbar {
	height: 32px;
	flex: none;
	display: grid;
	grid-template-columns: 1fr auto 1fr;
	align-items: center;
	padding: 0 13px;
	border-top: 1px solid #c0c4c4;
	background: linear-gradient(90deg, #d3ebe4, #d5e0dc 4%, #c6f6ec 11%, #c6fcf4 18%, #d6dddb 28%, #d8dbda 42%, #cbeee0 49%, #d4dedb 56%, #d8dedb);
	font-size: 8px;
	line-height: 11px;
	color: #444;
}
.weather {
	display: flex;
	align-items: center;
	gap: 1px;
}
.dock {
	display: flex;
	align-items: center;
	gap: 9px;
	margin-left: 7px;
}
.find {
	width: 137px;
	height: 19px;
	display: flex;
	align-items: center;
	gap: 6px;
	padding-left: 7px;
	border-radius: 10px;
	background: #f6f8f8;
	font-size: 9px;
}
.find input {
	flex: 1;
}
.apps {
	width: 354px;
	display: grid;
	grid-template-columns: repeat(12, 1fr);
	justify-items: center;
}
.apps button {
	width: 24px;
	height: 26px;
	position: relative;
}
.apps .now {
	background: #edf4f4;
	border-radius: 3px;
}
.apps .open::after {
	content: "";
	position: absolute;
	bottom: 0;
	left: 10px;
	width: 4px;
	height: 2px;
	background: #777;
}
.apps .now::after {
	left: 7px;
	width: 10px;
	background: #1470c0;
}
.tray {
	display: flex;
	align-items: center;
	justify-content: flex-end;
	gap: 6px;
}
.tray svg:first-child, .tray svg:nth-child(2) {
	margin-right: 6px;
}
.tray p {
	margin-left: 2px;
	text-align: right;
}

/* overlay */
.overlay {
	position: absolute;
	top: 0;
	left: 50%;
	width: 376px;
	margin-left: -142px;
	color: #fff;
	font-family: "Noto Sans", sans-serif;
	text-align: center;
}
.title {
	height: 21px;
	font-size: 14px;
	line-height: 21px;
}
.goal {
	height: 33px;
	border: 2px solid #aaa;
	background: #dadada;
	color: #111;
	font-size: 19px;
	line-height: 31px;
}
.range {
	display: flex;
	justify-content: space-between;
	font-size: 18px;
	line-height: 24px;
	font-weight: bold;
}
.range small {
	font-size: 12px;
	font-weight: normal;
}
.range .max {
	font-size: 12px;
}
.cursor {
	position: absolute;
	left: 665px;
	top: 493px;
}
```
